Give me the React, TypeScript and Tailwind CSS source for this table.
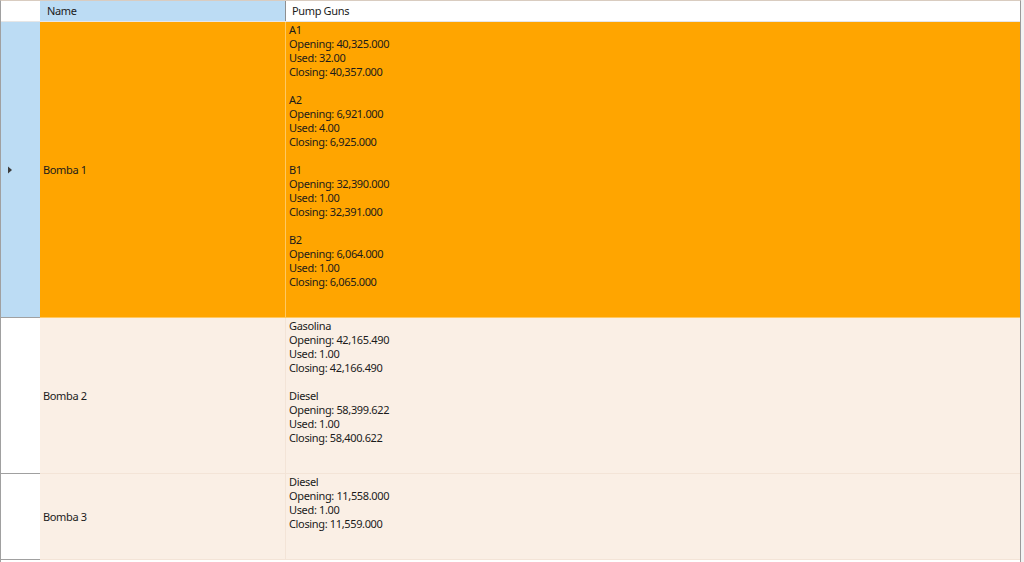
const rows = [
  {
    name: "Bomba 1",
    selected: true,
    guns: [
      ["A1", "40,325.000", "32.00", "40,357.000"],
      ["A2", "6,921.000", "4.00", "6,925.000"],
      ["B1", "32,390.000", "1.00", "32,391.000"],
      ["B2", "6,064.000", "1.00", "6,065.000"],
    ],
  },
  {
    name: "Bomba 2",
    selected: false,
    guns: [
      ["Gasolina", "42,165.490", "1.00", "42,166.490"],
      ["Diesel", "58,399.622", "1.00", "58,400.622"],
    ],
  },
  {
    name: "Bomba 3",
    selected: false,
    guns: [["Diesel", "11,558.000", "1.00", "11,559.000"]],
  },
];

function gunLines(guns: string[][]): string[] {
  const out: string[] = [];
  guns.forEach(([label, opening, used, closing], i) => {
    if (i > 0) out.push("");
    out.push(label, `Opening: ${opening}`, `Used: ${used}`, `Closing: ${closing}`);
  });
  out.push("", "");
  return out;
}

export default function App() {
  return (
    <div
      className="h-[562px] w-[1024px] overflow-hidden bg-[#f3f3f3] text-[11px] tracking-[-0.35px] text-[#1b1b1b]"
      style={{ fontFamily: '"Segoe UI", "Noto Sans", sans-serif' }}
    >
      <div className="h-full w-[1021px] border-l border-t border-r border-l-[#a0a0a0] border-t-[#d9ccc0] border-r-[#9a9a9a] bg-white">
        {/* header */}
        <div className="flex h-[21px] border-b border-[#e6e6e6]">
          <div className="w-[39px] shrink-0 bg-white" />
          <div className="flex w-[246px] shrink-0 items-center border-r border-[#8f8f8f] bg-[#bcdcf4] pl-[7px] pt-[1px]">
            Name
          </div>
          <div className="flex flex-1 items-center bg-white pl-[6px] pt-[1px]">Pump Guns</div>
        </div>

        {rows.map((row) => {
          const lines = gunLines(row.guns);
          const cellBg = row.selected ? "bg-[#ffa500]" : "bg-[#faefe5]";
          const line = row.selected ? "border-[#ffc861]" : "border-[#f3e4d7]";
          return (
            <div key={row.name} className="flex">
              <div
                className={`flex w-[39px] shrink-0 items-center border-b border-[#a0a0a0] pl-[6px] ${
                  row.selected ? "bg-[#bcdcf4]" : "bg-white"
                }`}
              >
                {row.selected && (
                  <svg width="6" height="8" viewBox="0 0 6 8">
                    <path d="M1 0.5 L5 4 L1 7.5 Z" fill="#3c3c3c" />
                  </svg>
                )}
              </div>
              <div
                className={`flex w-[246px] shrink-0 items-center border-b border-r pl-[3px] pt-[1px] ${cellBg} ${line}`}
              >
                {row.name}
              </div>
              <div className={`flex-1 border-b pl-[3px] pt-[1px] ${cellBg} ${line}`}>
                {lines.map((t, i) => (
                  <div key={i} className="h-[14px] leading-[14px] whitespace-pre">
                    {t || "\u00a0"}
                  </div>
                ))}
              </div>
            </div>
          );
        })}
      </div>
    </div>
  );
}
